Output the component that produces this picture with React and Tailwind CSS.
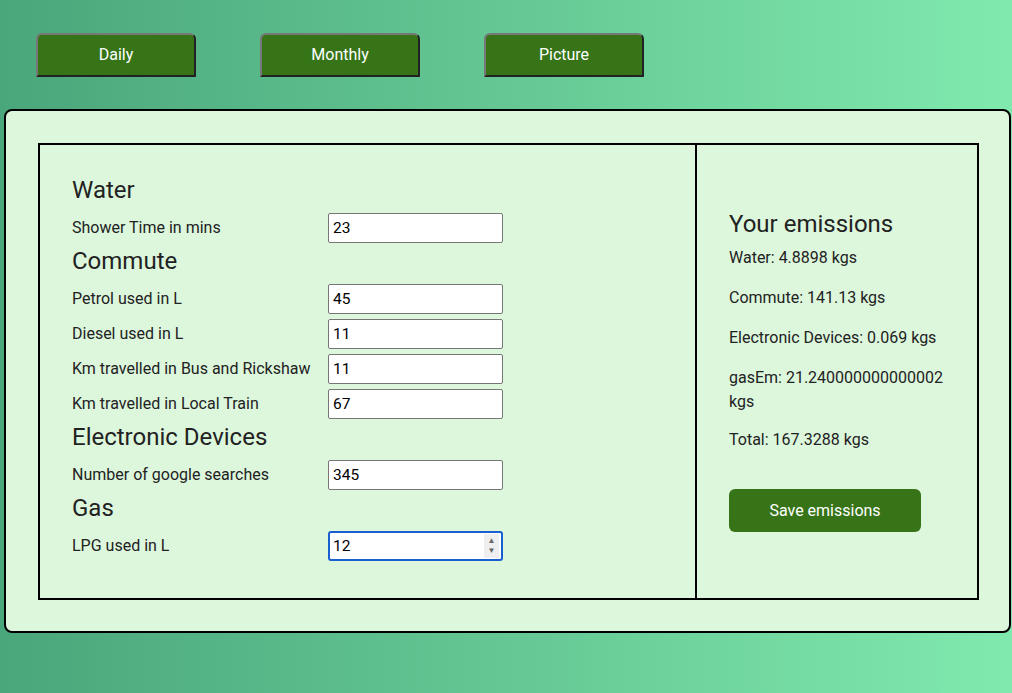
import { useState } from 'react';

const tabs = ['Daily', 'Monthly', 'Picture'];

const sections = [
  { title: 'Water', rows: [['Shower Time in mins', '23']] },
  {
    title: 'Commute',
    rows: [
      ['Petrol used in L', '45'],
      ['Diesel used in L', '11'],
      ['Km travelled in Bus and Rickshaw', '11'],
      ['Km travelled in Local Train', '67'],
    ],
  },
  { title: 'Electronic Devices', rows: [['Number of google searches', '345']] },
  { title: 'Gas', rows: [['LPG used in L', '12']], focused: true },
];

const results = [
  'Water: 4.8898 kgs',
  'Commute: 141.13 kgs',
  'Electronic Devices: 0.069 kgs',
  'gasEm: 21.240000000000002 kgs',
  'Total: 167.3288 kgs',
];

const Row = ({ label, value, focused }) => {
  const [val, setVal] = useState(value);
  return (
    <div className="flex items-center h-[30px] mb-[5px]">
      <span className="w-[256px] text-[16px] text-[#222]">{label}</span>
      {focused ? (
        <div className="relative w-[175px] h-[30px]">
          <input
            value={val}
            onChange={e => setVal(e.target.value)}
            className="w-full h-full bg-white border-2 border-[#1a5fd0] rounded-[3px] pl-[3px] text-[15.5px] text-black outline-none"
          />
          <div className="absolute right-[4px] top-[3px] bottom-[3px] w-[15px] bg-[#efefef] flex flex-col items-center justify-center text-[#666] text-[8px] leading-[10px]">
            <span>▲</span>
            <span>▼</span>
          </div>
        </div>
      ) : (
        <input
          value={val}
          onChange={e => setVal(e.target.value)}
          className="w-[175px] h-[30px] bg-white border border-[#767676] rounded-[2px] pl-[4px] text-[15.5px] text-black outline-none"
        />
      )}
    </div>
  );
};

const App = () => {
  return (
    <div className="min-h-[693px] bg-gradient-to-r from-[#4aa67b] to-[#80eaae] font-['Roboto',sans-serif] pt-[33px]">
      <div className="flex gap-[64px] pl-[36px]">
        {tabs.map(t => (
          <button
            key={t}
            className="w-[160px] h-[44px] bg-[#367417] text-white text-[16px] font-normal rounded-t-[6px] border-2 border-t-[#777] border-l-[#777] border-r-[#222] border-b-[#222]"
          >
            {t}
          </button>
        ))}
      </div>

      <div className="ml-[4px] mt-[32px] w-[1007px] h-[524px] bg-[#ddf7dd] border-2 border-black rounded-[8px] pt-[32px] pl-[32px]">
        <div className="flex w-[941px] h-[457px] border-2 border-black">
          <div className="w-[657px] border-r-2 border-black flex flex-col justify-center pl-[32px]">
            {sections.map(s => (
              <div key={s.title}>
                <h2 className="text-[24px] leading-[27px] text-[#222] mb-[9px]">{s.title}</h2>
                {s.rows.map(([label, value]) => (
                  <Row key={label} label={label} value={value} focused={s.focused} />
                ))}
              </div>
            ))}
          </div>
          <div className="flex-1 flex flex-col justify-center px-[32px]">
            <h2 className="text-[24px] leading-[27px] text-[#222] mb-[8px]">Your emissions</h2>
            {results.map((r, i) => (
              <p key={r} className={i === 3 ? 'text-[16px] leading-[24px] text-[#222] mb-[14px]' : 'text-[16px] leading-[24px] text-[#222] mb-[16px]'}>{r}</p>
            ))}
            <button className="mt-[21px] w-[192px] h-[43px] bg-[#367417] text-white text-[16px] font-normal rounded-[6px]">
              Save emissions
            </button>
          </div>
        </div>
      </div>
    </div>
  );
};

export default App;
